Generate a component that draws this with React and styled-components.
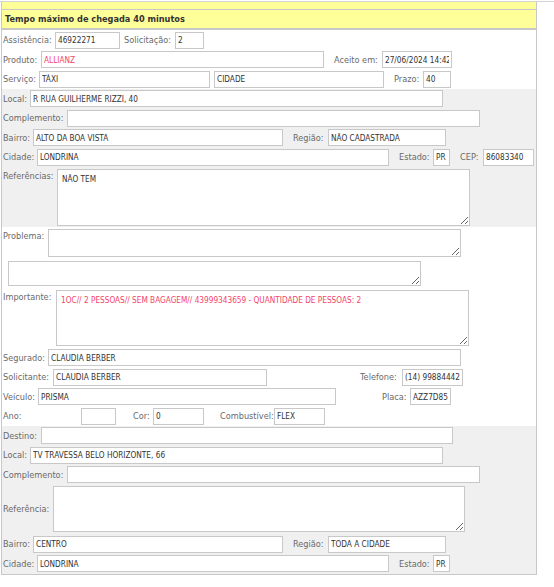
import styled, { createGlobalStyle } from "styled-components";

const GlobalStyle = createGlobalStyle`
  body {
    margin: 0;
    background: #ffffff;
    font-family: "DejaVu Sans", Verdana, sans-serif;
  }
`;

const App = () => {
  return (
    <>
      <GlobalStyle />
      <TopRule />
      <Panel>
        <Strip />
        <Header>Tempo máximo de chegada 40 minutos</Header>
        <Body>
          <Row>
            <Label w={52}>Assistência:</Label>
            <Input w={65} defaultValue="46922271" />
            <Label w={51} ml={4}>Solicitação:</Label>
            <Input w={29} defaultValue="2" />
          </Row>
          <Row>
            <Label w={38}>Produto:</Label>
            <Input w={283} alert defaultValue="ALLIANZ" />
            <Label w={48} ml={10}>Aceito em:</Label>
            <Input w={70} defaultValue="27/06/2024 14:42" />
          </Row>
          <Row>
            <Label w={36}>Serviço:</Label>
            <Input w={171} defaultValue="TÁXI" />
            <Input w={170} ml={4} defaultValue="CIDADE" />
            <Label w={29} ml={10}>Prazo:</Label>
            <Input w={28} defaultValue="40" />
          </Row>

          <Section>
            <Row>
              <Label w={27}>Local:</Label>
              <Input w={413} defaultValue="R RUA GUILHERME RIZZI, 40" />
            </Row>
            <Row>
              <Label w={64}>Complemento:</Label>
              <Input w={413} defaultValue="" />
            </Row>
            <Row>
              <Label w={30}>Bairro:</Label>
              <Input w={250} defaultValue="ALTO DA BOA VISTA" />
              <Label w={35} ml={10}>Região:</Label>
              <Input w={118} defaultValue="NÃO CADASTRADA" />
            </Row>
            <Row>
              <Label w={34}>Cidade:</Label>
              <Input w={352} defaultValue="LONDRINA" />
              <Label w={34} ml={10}>Estado:</Label>
              <Input w={17} defaultValue="PR" />
              <Label w={23} ml={10}>CEP:</Label>
              <Input w={51} defaultValue="86083340" />
            </Row>
            <AreaRow pt={1.5} pb={1.5}>
              <Label w={54} top>Referências:</Label>
              <TextArea w={413} h={57} defaultValue="NÃO TEM" />
            </AreaRow>
          </Section>

          <AreaRow pt={2} pb={2}>
            <Label w={45} top>Problema:</Label>
            <TextArea w={413} h={28} defaultValue="" />
          </AreaRow>
          <AreaRow pt={2} pb={2}>
            <TextArea w={413} h={25} ml={5} defaultValue="" />
          </AreaRow>
          <AreaRow pt={2} pb={2}>
            <Label w={53} top>Importante:</Label>
            <TextArea
              w={413}
              h={56}
              alert
              defaultValue="1OC// 2 PESSOAS// SEM BAGAGEM// 43999343659 - QUANTIDADE DE PESSOAS: 2"
            />
          </AreaRow>
          <Row>
            <Label w={45}>Segurado:</Label>
            <Input w={413} defaultValue="CLAUDIA BERBER" />
          </Row>
          <Row>
            <Label w={50}>Solicitante:</Label>
            <Input w={214} defaultValue="CLAUDIA BERBER" />
            <Label w={42} ml={93}>Telefone:</Label>
            <Input w={61} defaultValue="(14) 998844423" />
          </Row>
          <Row>
            <Label w={35}>Veículo:</Label>
            <Input w={298} defaultValue="PRISMA" />
            <Label w={28} ml={46}>Placa:</Label>
            <Input w={41} defaultValue="AZZ7D85" />
          </Row>
          <Row>
            <Label w={78}>Ano:</Label>
            <Input w={35} defaultValue="" />
            <Label w={20} ml={17}>Cor:</Label>
            <Input w={51} defaultValue="0" />
            <Label w={54} ml={16}>Combustível:</Label>
            <Input w={51} defaultValue="FLEX" />
          </Row>

          <Section>
            <Row>
              <Label w={38}>Destino:</Label>
              <Input w={412} defaultValue="" />
            </Row>
            <Row>
              <Label w={27}>Local:</Label>
              <Input w={413} defaultValue="TV TRAVESSA BELO HORIZONTE, 66" />
            </Row>
            <Row>
              <Label w={64}>Complemento:</Label>
              <Input w={413} defaultValue="" />
            </Row>
            <AreaRow pt={1.5} pb={2.5}>
              <Label w={50}>Referência:</Label>
              <TextArea w={412} h={46} defaultValue="" />
            </AreaRow>
            <Row>
              <Label w={30}>Bairro:</Label>
              <Input w={250} defaultValue="CENTRO" />
              <Label w={35} ml={10}>Região:</Label>
              <Input w={118} defaultValue="TODA A CIDADE" />
            </Row>
            <Row>
              <Label w={34}>Cidade:</Label>
              <Input w={352} defaultValue="LONDRINA" />
              <Label w={34} ml={10}>Estado:</Label>
              <Input w={17} defaultValue="PR" />
            </Row>
          </Section>
        </Body>
      </Panel>
    </>
  );
};

const TopRule = styled.div`
  height: 2px;
  border-bottom: 1px solid #d4d4d4;
  box-sizing: border-box;
`;

const Panel = styled.div`
  width: 536px;
  margin-left: 1px;
  border: 1px solid #c8c8c8;
  border-top: none;
  box-sizing: border-box;
`;

const Strip = styled.div`
  height: 7px;
  background: #ffff99;
  border-bottom: 1px solid #c8c8c8;
`;

const Header = styled.div`
  height: 18px;
  line-height: 18px;
  padding-left: 3px;
  background: #ffff99;
  border-bottom: 2px solid #c8c8c8;
  font-family: "DejaVu Sans", Verdana, sans-serif;
  font-weight: bold;
  font-size: 8.2px;
  color: #333333;
`;

const Body = styled.div`
  display: flex;
  flex-direction: column;
  padding: 0.5px 0 0;
`;

const Section = styled.div`
  display: flex;
  flex-direction: column;
  background: #f0f0f0;
`;

const Row = styled.div`
  display: flex;
  align-items: center;
  height: 19.5px;
  padding-left: 1px;
`;

const AreaRow = styled.div`
  display: flex;
  align-items: center;
  padding: ${(p) => p.pt}px 0 ${(p) => p.pb}px 1px;
`;

const Label = styled.span`
  flex: none;
  width: ${(p) => p.w}px;
  margin-left: ${(p) => p.ml || 0}px;
  align-self: ${(p) => (p.top ? "flex-start" : "center")};
  padding-top: ${(p) => (p.top ? 2 : 0)}px;
  font-family: "DejaVu Sans", Verdana, sans-serif;
  font-size: 8.2px;
  color: #6a6a6a;
  white-space: nowrap;
`;

const Input = styled.input.withConfig({
  shouldForwardProp: (prop) => !["w", "ml", "alert"].includes(prop),
})`
  flex: none;
  box-sizing: border-box;
  width: ${(p) => p.w}px;
  height: 17px;
  margin: 0 0 0 ${(p) => p.ml || 0}px;
  padding: 0 2px;
  border: 1px solid #c8c8c8;
  border-radius: 0;
  background: #ffffff;
  font-family: "DejaVu Sans Condensed", Tahoma, sans-serif;
  font-size: 8.2px;
  color: ${(p) => (p.alert ? "#f5436a" : "#333333")};
  outline: none;
`;

const TextArea = styled.textarea.withConfig({
  shouldForwardProp: (prop) => !["w", "h", "ml", "alert"].includes(prop),
})`
  flex: none;
  box-sizing: border-box;
  width: ${(p) => p.w}px;
  height: ${(p) => p.h}px;
  margin: 0 0 0 ${(p) => p.ml || 0}px;
  padding: 4px 4px;
  border: 1px solid #c8c8c8;
  border-radius: 0;
  background: #ffffff;
  font-family: "DejaVu Sans Condensed", Tahoma, sans-serif;
  font-size: 8.2px;
  color: ${(p) => (p.alert ? "#f5436a" : "#333333")};
  outline: none;
`;

export default App;
